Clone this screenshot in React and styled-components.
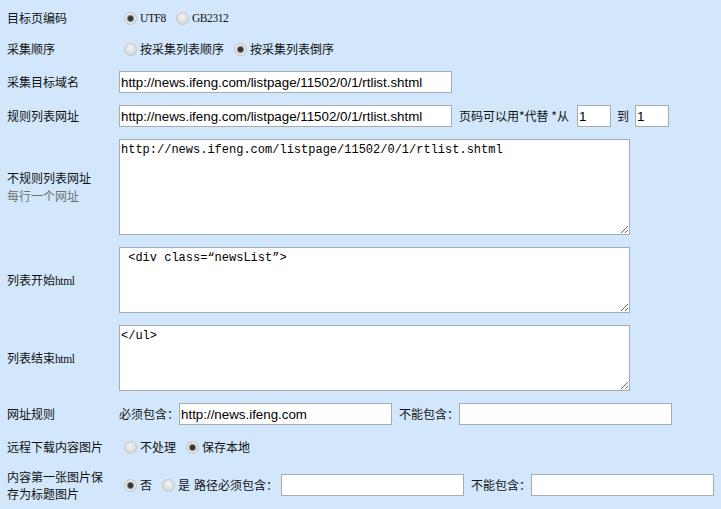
import React from "react";
import styled, { createGlobalStyle } from "styled-components";

const GlobalStyle = createGlobalStyle`
  html, body { margin: 0; padding: 0; background: #d2e7fb; }
  body {
    font-family: "Noto Sans CJK SC", "Liberation Sans", sans-serif;
    font-size: 12px;
    color: #111;
  }
`;

const Page = styled.div`
  width: 721px;
  height: 509px;
  box-sizing: border-box;
  padding: 3px 0 0 7px;
  overflow: hidden;
`;

const Row = styled.div`
  display: flex;
  align-items: center;
  padding: 6px 0;
  min-height: ${(p) => p.$minH || 0}px;
`;

const Label = styled.div`
  width: 112px;
  box-sizing: border-box;
  padding-right: 8px;
  flex: none;
  line-height: ${(p) => p.$lh || 18}px;
`;

const Note = styled.div`
  color: #707070;
`;

const Control = styled.div`
  display: flex;
  align-items: center;
  white-space: nowrap;
`;

const Latin = styled.span`
  font-family: "Liberation Serif", serif;
  font-size: 11.5px;
  letter-spacing: -0.4px;
`;

const Choice = styled.label`
  display: inline-flex;
  align-items: center;
  margin-right: ${(p) => (p.$last ? 0 : 5)}px;
  line-height: 18px;
`;

const Radio = styled.input.attrs({ type: "radio" })`
  appearance: none;
  -webkit-appearance: none;
  width: 13px;
  height: 13px;
  flex: none;
  margin: 1px 3px 0 5px;
  border-radius: 50%;
  box-sizing: border-box;
  border: 1px solid #c3c6c9;
  background: radial-gradient(circle at 50% 35%, #f4f4f4 0%, #e0e0e0 50%, #cdcdcd 100%);
  &:checked {
    background: radial-gradient(circle, #2e2e2e 0, #3c3c3c 2.2px, #8c8c8c 3.2px, #ececec 4px, #dcdcdc 70%, #c8c8c8 100%);
  }
`;

const Text = styled.span`
  margin-left: ${(p) => p.$ml || 0}px;
  margin-right: ${(p) => p.$mr || 0}px;
  line-height: 18px;
`;

const Field = styled.input.attrs({ type: "text" })`
  width: ${(p) => p.$w}px;
  height: 22px;
  box-sizing: border-box;
  margin: 0 0 0 ${(p) => p.$ml || 0}px;
  padding: 0 1px;
  border: 1px solid #a5acb2;
  background: #fff;
  font-family: "Liberation Sans", Arial, sans-serif;
  font-size: 13.33px;
  color: #000;
  outline: none;
`;

const Area = styled.textarea`
  width: 511px;
  height: ${(p) => p.$h}px;
  box-sizing: border-box;
  margin: 0;
  padding: 2px 1px;
  border: 1px solid #a5acb2;
  background: #fff;
  font-family: "Liberation Mono", monospace;
  font-size: 12px;
  line-height: 16px;
  color: #000;
  display: block;
  outline: none;
`;

const URL = "http://news.ifeng.com/listpage/11502/0/1/rtlist.shtml";

export default function App() {
  return (
    <>
      <GlobalStyle />
      <Page>
        <Row $minH={18}>
          <Label>目标页编码</Label>
          <Control>
            <Choice>
              <Radio name="enc" defaultChecked />
              <Latin>UTF8</Latin>
            </Choice>
            <Choice $last>
              <Radio name="enc" />
              <Latin>GB2312</Latin>
            </Choice>
          </Control>
        </Row>
        <Row $minH={20}>
          <Label>采集顺序</Label>
          <Control>
            <Choice>
              <Radio name="order" />
              按采集列表顺序
            </Choice>
            <Choice $last>
              <Radio name="order" defaultChecked />
              按采集列表倒序
            </Choice>
          </Control>
        </Row>
        <Row>
          <Label>采集目标域名</Label>
          <Control>
            <Field $w={333} defaultValue={URL} />
          </Control>
        </Row>
        <Row>
          <Label>规则列表网址</Label>
          <Control>
            <Field $w={333} defaultValue={URL} />
            <Text $ml={7} $mr={8}>页码可以用*代替 *从</Text>
            <Field $w={34} defaultValue="1" />
            <Text $ml={6} $mr={6}>到</Text>
            <Field $w={34} defaultValue="1" />
          </Control>
        </Row>
        <Row>
          <Label>
            不规则列表网址
            <Note>每行一个网址</Note>
          </Label>
          <Control>
            <Area $h={96} defaultValue={URL} />
          </Control>
        </Row>
        <Row>
          <Label>
            列表开始<Latin>html</Latin>
          </Label>
          <Control>
            <Area $h={66} defaultValue={" <div class=“newsList”>"} />
          </Control>
        </Row>
        <Row>
          <Label>
            列表结束<Latin>html</Latin>
          </Label>
          <Control>
            <Area $h={66} defaultValue="</ul>" />
          </Control>
        </Row>
        <Row>
          <Label>网址规则</Label>
          <Control>
            <Text>必须包含：</Text>
            <Field $w={213} defaultValue="http://news.ifeng.com" />
            <Text $ml={7}>不能包含：</Text>
            <Field $w={213} />
          </Control>
        </Row>
        <Row $minH={19}>
          <Label>远程下载内容图片</Label>
          <Control>
            <Choice>
              <Radio name="dl" />
              不处理
            </Choice>
            <Choice $last>
              <Radio name="dl" defaultChecked />
              保存本地
            </Choice>
          </Control>
        </Row>
        <Row>
          <Label $lh={17}>内容第一张图片保存为标题图片</Label>
          <Control>
            <Choice>
              <Radio name="title" defaultChecked />
              否
            </Choice>
            <Choice $last>
              <Radio name="title" />
              是
            </Choice>
            <Text $ml={4}>路径必须包含：</Text>
            <Field $w={183} $ml={3} />
            <Text $ml={7}>不能包含：</Text>
            <Field $w={183} />
          </Control>
        </Row>
      </Page>
    </>
  );
}
